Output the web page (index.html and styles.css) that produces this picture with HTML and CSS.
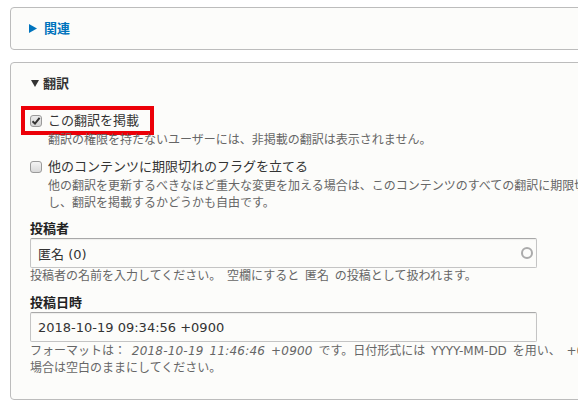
FILE: index.html
```html
<!DOCTYPE html>
<html lang="ja">
<head>
<meta charset="utf-8">
<title>翻訳</title>
<link rel="stylesheet" href="styles.css">
</head>
<body>
<div class="page">
  <section class="box">
    <div class="summary summary-closed">
      <svg class="caret" width="8" height="9" viewBox="0 0 8 9"><path d="M0 0 L8 4.5 L0 9 Z" fill="#0074bd"/></svg>
      <span>関連</span>
    </div>
  </section>

  <section class="box box-open">
    <div class="summary summary-open">
      <svg class="caret caret-down" width="8" height="7" viewBox="0 0 8 7"><path d="M0 0 L8 0 L4 7 Z" fill="#333"/></svg>
      <span>翻訳</span>
    </div>
    <div class="box-content">
      <div class="form-item">
        <label class="check-row highlight">
          <input type="checkbox" class="check" checked>
          <span>この翻訳を掲載</span>
        </label>
        <div class="description indent first">翻訳の権限を持たないユーザーには、非掲載の翻訳は表示されません。</div>
      </div>

      <div class="form-item item-gap">
        <label class="check-row">
          <input type="checkbox" class="check">
          <span>他のコンテンツに期限切れのフラグを立てる</span>
        </label>
        <div class="description indent first">他の翻訳を更新するべきなほど重大な変更を加える場合は、このコンテンツのすべての翻訳に期限切れのフラグを立てることができます。内容を更新<br>し、翻訳を掲載するかどうかも自由です。</div>
      </div>

      <div class="form-item field">
        <label class="field-label">投稿者</label>
        <div class="input-wrap">
          <input type="text" class="text-input" value="匿名 (0)">
          <span class="throbber"></span>
        </div>
        <div class="description">投稿者の名前を入力してください。 空欄にすると 匿名 の投稿として扱われます。</div>
      </div>

      <div class="form-item field">
        <label class="field-label">投稿日時</label>
        <div class="input-wrap">
          <input type="text" class="text-input" value="2018-10-19 09:34:56 +0900">
        </div>
        <div class="description first">フォーマットは： <em>2018-10-19 11:46:46 +0900</em> です。日付形式には YYYY-MM-DD を用い、 +0900 はUTCからのタイムゾーンオフセットです。フォームの送信時刻を使用する<br>場合は空白のままにしてください。</div>
      </div>
    </div>
  </section>
</div>
</body>
</html>
```

FILE: styles.css
```css
html, body {
  margin: 0;
  padding: 0;
  overflow: hidden;
  background: #fff;
}

body {
  font-family: "DejaVu Sans", "Noto Sans CJK JP", sans-serif;
  font-size: 13px;
  color: #333;
}

.page {
  padding: 7px 0 0 10px;
  width: 980px;
}

.box {
  width: 960px;
  border: 1px solid #bcbcbc;
  border-radius: 4px;
  background: #fcfcfa;
}

.box + .box {
  margin-top: 12px;
}

.summary {
  display: flex;
  align-items: center;
  height: 21px;
  padding: 10px 0 10px 18px;
  font-weight: bold;
  font-size: 13px;
  line-height: 21px;
}

.summary .caret {
  margin-right: 7px;
}

.summary .caret-down {
  margin-left: 2px;
  margin-right: 4px;
}

.summary-closed {
  color: #0074bd;
}

.summary-open {
  color: #333;
}

.box-content {
  padding: 6px 0 22px 19px;
}

.check-row {
  display: inline-flex;
  align-items: center;
  height: 21px;
  line-height: 21px;
  font-size: 13px;
  color: #333;
}

.highlight {
  margin-left: -5px;
  padding: 0 11px 0 5px;
  outline: 4px solid #ec0008;
}

.check {
  appearance: none;
  -webkit-appearance: none;
  width: 12px;
  height: 12px;
  margin: 0 6px 0 0;
  border: 1px solid #9a9a9a;
  border-radius: 3px;
  background: linear-gradient(#f4f4f4, #d9d9d9);
  box-sizing: border-box;
  flex: none;
}

.check:checked {
  background-image: url("data:image/svg+xml;utf8,<svg xmlns='http://www.w3.org/2000/svg' width='10' height='10' viewBox='0 0 10 10'><path d='M1.5 5.2 L4 7.6 L8.6 1.8' fill='none' stroke='%23333' stroke-width='2'/></svg>"), linear-gradient(#ececec, #d4d4d4);
  background-repeat: no-repeat;
  background-position: center;
}

.description {
  font-size: 12px;
  line-height: 17px;
  color: #666;
  white-space: nowrap;
  word-spacing: 2px;
}

.description em {
  font-style: italic;
  letter-spacing: 0.2px;
}

.indent {
  padding-left: 18px;
}

.first {
  margin-top: 1px;
}

.item-gap {
  margin-top: 7px;
}

.field {
  margin-top: 8px;
}

.field + .field {
  margin-top: 9px;
}

.field-label {
  display: block;
  font-weight: bold;
  font-size: 13px;
  line-height: 18px;
  color: #222;
}

.input-wrap {
  position: relative;
  width: 507px;
}

.text-input {
  display: block;
  box-sizing: border-box;
  width: 507px;
  height: 30px;
  margin: 0;
  padding: 0 7px;
  border: 1px solid #c4c4c4;
  border-top-color: #a8a8a8;
  border-radius: 2px;
  background: #fcfcfa;
  box-shadow: inset 0 1px 1px rgba(0, 0, 0, 0.06);
  font-family: "DejaVu Sans", "Noto Sans CJK JP", sans-serif;
  font-size: 13px;
  color: #333;
  outline: none;
}

.throbber {
  position: absolute;
  right: 4px;
  top: 9px;
  width: 8px;
  height: 8px;
  border: 2px solid #ababab;
  border-radius: 50%;
}
```
